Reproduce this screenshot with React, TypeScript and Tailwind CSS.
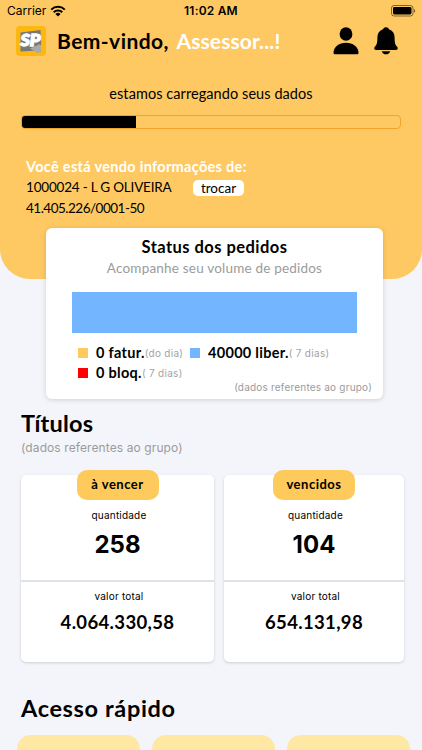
import React from 'react';

interface LegendProps {
  color: string;
  label: string;
  note: string;
  className?: string;
}

interface TituloProps {
  title: string;
  quantidade: string;
  total: string;
  className: string;
}

function StatusBar() {
  return (
    <div className="grid h-[22px] grid-cols-3 items-center font-['Inter'] text-[12px] leading-[22px]">
      <div className="flex items-center gap-1 pl-[7px]">
        <span>Carrier</span>
        <svg width="16" height="12" viewBox="0 0 16 12" className="-mt-px">
          <path d="M1.2 4.6a9.8 9.8 0 0 1 13.6 0" fill="none" stroke="#000" strokeWidth="2" />
          <path d="M3.7 7.2a6.2 6.2 0 0 1 8.6 0" fill="none" stroke="#000" strokeWidth="2" />
          <path d="M8 11.6 5.4 9a3.7 3.7 0 0 1 5.2 0z" />
        </svg>
      </div>
      <span className="text-center font-semibold tracking-[0.2px]">11:02 AM</span>
      <div className="flex justify-end pr-[6px]">
        <svg width="25" height="12" viewBox="0 0 25 12">
          <rect x="0.5" y="0.5" width="21.5" height="10.5" rx="2.6" fill="none" stroke="#000" strokeOpacity="0.5" />
          <rect x="2" y="2" width="18.5" height="7.5" rx="1.4" />
          <path d="M23 4v3.8c1.6-.6 1.6-3.2 0-3.8z" fillOpacity="0.55" />
        </svg>
      </div>
    </div>
  );
}

function Logo() {
  return (
    <svg width="30" height="30" viewBox="0 0 30 30">
      <rect width="30" height="30" rx="4" fill="#fdb80f" />
      <path d="M4.500 6.500 24.500 4l.7 14-3 6.500L4.500 25.500z" fill="#77787c" />
      <path d="m14 22.500 10-4.500 1.500 8-4 1z" fill="#a7a9ad" />
      <text
        x="14.4"
        y="20.300"
        textAnchor="middle"
        textLength="20"
        lengthAdjust="spacingAndGlyphs"
        fontFamily="Lato, sans-serif"
        fontWeight="900"
        fontStyle="italic"
        fontSize="16.5"
        fill="#fff"
        stroke="#fff"
        strokeWidth="1.3"
      >
        SP
      </text>
    </svg>
  );
}

function Legend({ color, label, note, className }: LegendProps) {
  return (
    <div className={`flex items-center whitespace-nowrap ${className ?? ''}`}>
      <span className={`mr-2 h-[10px] w-[10px] ${color}`} />
      <span className="text-[14.5px] font-bold tracking-[0.3px]">{label}</span>
      <span className="pt-px font-['Inter'] text-[10px] tracking-[0.3px] text-[#a3a3a3]">{note}</span>
    </div>
  );
}

function Titulo({ title, quantidade, total, className }: TituloProps) {
  return (
    <div
      className={`flex h-[187px] flex-col items-center rounded-[5px] bg-white shadow-[0_1px_3px_rgba(0,0,0,0.16)] ${className}`}
    >
      <div className="-mt-[5px] flex h-[30px] w-[82px] items-center justify-center rounded-[10px] bg-[#fdca5b] text-[13px] font-bold tracking-[0.5px]">
        {title}
      </div>
      <span className="mt-[7px] pl-[3px] font-['Inter'] text-[10px] leading-4 tracking-[0.2px]">quantidade</span>
      <span className="mt-[7px] font-['Inter'] text-[24px] leading-[30px] font-bold">{quantidade}</span>
      <div className="mt-5 h-[1.5px] w-full shrink-0 bg-[#dfe1e8]" />
      <span className="mt-[6px] pl-[3px] font-['Inter'] text-[10px] leading-4 tracking-[0.2px]">valor total</span>
      <span className="mt-[6px] text-[18.5px] leading-6 font-bold tracking-[0.35px]">{total}</span>
    </div>
  );
}

export default function App() {
  return (
    <div className="h-[750px] w-[422px] overflow-hidden bg-[#f4f5fa] font-['Lato',sans-serif] text-black">
      <header className="h-[279px] rounded-b-[30px] bg-[#fec962]">
        <StatusBar />
        <div className="flex h-[38px] items-center pr-[24px] pl-4">
          <Logo />
          <h1 className="ml-[11px] flex-1 text-[21px] leading-7 font-bold whitespace-nowrap tracking-[0.45px]">
            Bem-vindo, <span className="ml-0.5 tracking-[0.1px] text-white">Assessor...!</span>
          </h1>
          <svg width="26" height="28" viewBox="0 0 26 28" className="mr-[15px]">
            <ellipse cx="13" cy="7" rx="6.4" ry="6.8" />
            <path d="M2.2 27.3C1 27.3.4 26.6.5 25.4 1 19.500 6 15.700 13 15.700s12 3.800 12.500 9.700c.1 1.200-.5 1.900-1.700 1.900z" />
          </svg>
          <svg width="24" height="28" viewBox="0 0 24 28">
            <path d="M12 .3c1.500 0 2.600.9 3 1.900 3.600 1.200 5.600 4.100 5.600 8 0 5.800.7 7.500 2.500 9.500 1.300 1.500.6 3.200-1.200 3.200H2.100c-1.800 0-2.500-1.700-1.200-3.200 1.800-2 2.500-3.700 2.500-9.500 0-3.900 2-6.800 5.600-8 .4-1 1.500-1.900 3-1.900z" />
            <path d="M7.700 24.200h8.600c-.6 1.900-2.200 3.100-4.300 3.100s-3.700-1.200-4.300-3.100z" />
          </svg>
        </div>

        <p className="mt-[24px] text-center text-[14.5px] leading-5 tracking-[0.07px]">estamos carregando seus dados</p>
        <div className="mx-[21px] mt-[11px] h-[14px] overflow-hidden rounded-[4px] border border-[#f3a32a]">
          <div className="h-full w-[114px] bg-black" />
        </div>

        <div className="mt-[28px] pl-[26px] text-[13.5px]">
          <p className="text-[14.5px] leading-5 font-bold tracking-[0.3px] text-white">Você está vendo informações de:</p>
          <div className="flex h-[21px] items-center">
            <span className="w-[167px] tracking-[-0.2px]">1000024 - L G OLIVEIRA</span>
            <button className="flex h-4 w-[51px] items-center justify-center rounded-[5px] bg-white pt-px">
              trocar
            </button>
          </div>
          <p className="leading-5 tracking-[-0.5px]">41.405.226/0001-50</p>
        </div>
      </header>

      <section className="relative -mt-[51px] ml-[46px] h-[171px] w-[337px] rounded-[6px] bg-white pt-[8px] shadow-[0_1px_5px_rgba(0,0,0,0.15)]">
        <h2 className="text-center text-[16.5px] leading-[22px] font-bold tracking-[0.45px]">Status dos pedidos</h2>
        <p className="text-center text-[13.5px] leading-5 tracking-[0.2px] text-[#9b9b9b]">
          Acompanhe seu volume de pedidos
        </p>
        <div className="mx-[26px] mt-[14px] h-[41px] bg-[#74b5ff]" />
        <div className="mt-[10px] flex h-5 pl-8">
          <Legend color="bg-[#fdca5b]" label="0 fatur." note="(do dia)" className="w-[112px]" />
          <Legend color="bg-[#74b5ff]" label="40000 liber." note="( 7 dias)" />
        </div>
        <div className="flex h-5 pl-8">
          <Legend color="bg-[#ff0000]" label="0 bloq." note="( 7 dias)" />
        </div>
        <p className="-mt-1 pr-[11px] text-right font-['Inter'] text-[10px] leading-4 tracking-[0.2px] text-[#9b9b9b]">
          (dados referentes ao grupo)
        </p>
      </section>

      <section className="pt-2 pl-[21px]">
        <h2 className="text-[23.5px] leading-8 font-bold tracking-[0.2px]">Títulos</h2>
        <p className="mt-px font-['Inter'] text-[12px] leading-4 tracking-[0.1px] text-[#9b9b9b]">
          (dados referentes ao grupo)
        </p>
        <div className="mt-[19px] flex gap-[10px]">
          <Titulo title="à vencer" quantidade="258" total="4.064.330,58" className="w-[193px]" />
          <Titulo title="vencidos" quantidade="104" total="654.131,98" className="w-[180px]" />
        </div>
      </section>

      <section className="pt-[30px]">
        <h2 className="pl-[21px] text-[23.5px] leading-8 font-bold tracking-[0.65px]">Acesso rápido</h2>
        <div className="mt-[11px] flex gap-[12px] pl-[17px]">
          <div className="h-20 w-[123px] rounded-[14px] bg-[#ffe8a3]" />
          <div className="h-20 w-[123px] rounded-[14px] bg-[#ffe8a3]" />
          <div className="h-20 w-[123px] rounded-[14px] bg-[#ffe8a3]" />
        </div>
      </section>
    </div>
  );
}
